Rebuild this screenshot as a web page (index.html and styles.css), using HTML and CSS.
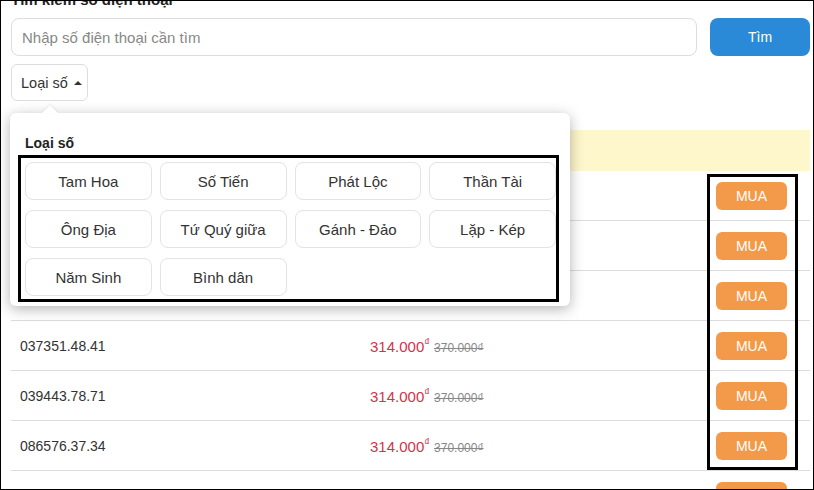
FILE: index.html
```html
<!DOCTYPE html>
<html lang="vi">
<head>
    <meta charset="UTF-8">
    <meta name="viewport" content="width=device-width, initial-scale=1.0">
    <title>Tìm kiếm số điện thoại</title>
    <link rel="stylesheet" href="styles.css">
</head>
<body>
    <div class="page">
        <h2 class="section-title">Tìm kiếm số điện thoại</h2>
        <div class="search">
            <input class="search-input" type="text" placeholder="Nhập số điện thoại cần tìm">
            <button class="search-btn">Tìm</button>
        </div>
        <div class="filter">
            <button class="filter-btn">Loại số <span class="caret"></span></button>
            <div class="filter-menu">
                <div class="filter-menu-title">Loại số</div>
                <div class="type-grid">
                    <button class="type-btn">Tam Hoa</button>
                    <button class="type-btn">Số Tiến</button>
                    <button class="type-btn">Phát Lộc</button>
                    <button class="type-btn">Thần Tài</button>
                    <button class="type-btn">Ông Địa</button>
                    <button class="type-btn">Tứ Quý giữa</button>
                    <button class="type-btn">Gánh - Đảo</button>
                    <button class="type-btn">Lặp - Kép</button>
                    <button class="type-btn">Năm Sinh</button>
                    <button class="type-btn">Bình dân</button>
                </div>
            </div>
        </div>
        <div class="list">
            <div class="list-note"></div>
            <div class="row">
                <span class="phone">034512.68.86</span>
                <span class="price">314.000<sup>₫</sup> <del>370.000₫</del></span>
                <button class="buy-btn">MUA</button>
            </div>
            <div class="row">
                <span class="phone">035298.19.79</span>
                <span class="price">314.000<sup>₫</sup> <del>370.000₫</del></span>
                <button class="buy-btn">MUA</button>
            </div>
            <div class="row">
                <span class="phone">036847.22.53</span>
                <span class="price">314.000<sup>₫</sup> <del>370.000₫</del></span>
                <button class="buy-btn">MUA</button>
            </div>
            <div class="row">
                <span class="phone">037351.48.41</span>
                <span class="price">314.000<sup>₫</sup> <del>370.000₫</del></span>
                <button class="buy-btn">MUA</button>
            </div>
            <div class="row">
                <span class="phone">039443.78.71</span>
                <span class="price">314.000<sup>₫</sup> <del>370.000₫</del></span>
                <button class="buy-btn">MUA</button>
            </div>
            <div class="row">
                <span class="phone">086576.37.34</span>
                <span class="price">314.000<sup>₫</sup> <del>370.000₫</del></span>
                <button class="buy-btn">MUA</button>
            </div>
            <div class="row row-last">
                <button class="buy-btn"></button>
            </div>
            <div class="mark"></div>
        </div>
    </div>
</body>
</html>
```

FILE: styles.css
```css
* {
    box-sizing: border-box;
}
body {
    margin: 0;
    font-family: "Liberation Sans", Arial, sans-serif;
    color: #333;
    background: #fff;
}
.page {
    height: 490px;
    border: 1px solid #000;
    padding: 0 3px 0 10px;
    overflow: hidden;
}
.section-title {
    margin: -10px 0 0;
    font-size: 15px;
    line-height: 18px;
    font-weight: bold;
    color: #222;
}
.search {
    display: flex;
    gap: 13px;
    margin-top: 9px;
    height: 38px;
}
.search-input {
    flex: 1;
    border: 1px solid #ddd;
    border-radius: 8px;
    padding: 0 10px;
    font-family: inherit;
    font-size: 15px;
    color: #333;
    outline: none;
}
.search-input::placeholder {
    color: #888;
}
.search-btn {
    width: 100px;
    border: none;
    border-radius: 8px;
    background: #2b8ad8;
    color: #fff;
    font-family: inherit;
    font-size: 14px;
}
.filter {
    position: relative;
    margin-top: 8px;
}
.filter-btn {
    display: flex;
    align-items: center;
    height: 37px;
    padding: 0 5px 0 9px;
    border: 1px solid #ddd;
    border-radius: 6px;
    background: #fff;
    font-family: inherit;
    font-size: 14.5px;
    color: #333;
}
.caret {
    margin-left: 6px;
    border-left: 4px solid transparent;
    border-right: 4px solid transparent;
    border-bottom: 4px solid #333;
}
.filter-menu {
    position: absolute;
    top: 49px;
    left: -1px;
    width: 560px;
    z-index: 2;
    padding: 20px 11px 4px 8px;
    background: #fff;
    border-radius: 6px;
    box-shadow: 0 3px 14px rgba(0, 0, 0, 0.3);
}
.filter-menu::before {
    content: "";
    position: absolute;
    top: -8px;
    left: 32px;
    border-left: 8px solid transparent;
    border-right: 8px solid transparent;
    border-bottom: 8px solid #fff;
    filter: drop-shadow(0 -1px 1px rgba(0, 0, 0, 0.08));
}
.filter-menu-title {
    padding-left: 7px;
    margin-bottom: 2px;
    font-size: 14px;
    line-height: 20px;
    font-weight: bold;
    color: #222;
}
.type-grid {
    display: grid;
    grid-template-columns: repeat(4, 1fr);
    grid-auto-rows: 38px;
    gap: 10px 8px;
    padding: 4px 0 3px 4px;
    border: 3px solid #000;
}
.type-btn {
    border: 1px solid #e3e3e3;
    border-radius: 8px;
    background: #fff;
    font-family: inherit;
    font-size: 15px;
    color: #333;
}
.list {
    position: relative;
    margin-top: 29px;
}
.list-note {
    height: 41px;
    background: #fef7cc;
}
.row {
    display: flex;
    align-items: center;
    height: 50px;
    padding: 0 23px 0 9px;
    border-bottom: 1px solid #ddd;
}
.row-last {
    justify-content: flex-end;
}
.phone {
    width: 350px;
    font-size: 14px;
    color: #333;
}
.price {
    flex: 1;
    font-size: 15px;
    color: #d2334c;
}
.price sup {
    font-size: 11px;
}
.price del {
    font-size: 12px;
    color: #888;
}
.buy-btn {
    width: 71px;
    height: 28px;
    border: none;
    border-radius: 6px;
    background: #f39a4a;
    color: #fff;
    font-family: inherit;
    font-size: 14px;
}
.mark {
    position: absolute;
    top: 44px;
    left: 696px;
    width: 91px;
    height: 296px;
    border: 3px solid #000;
}
```
